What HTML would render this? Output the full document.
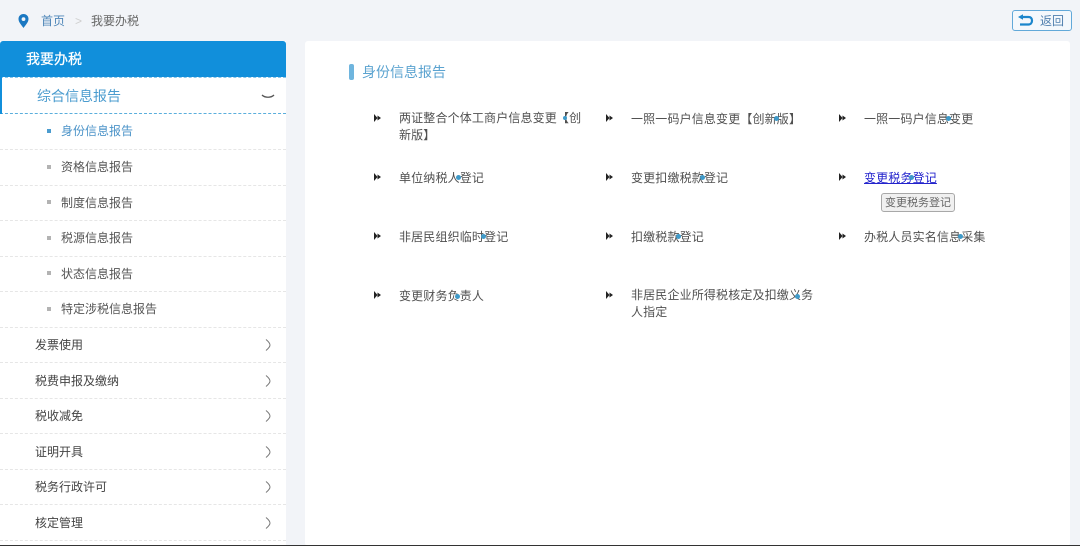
<!DOCTYPE html>
<html lang="zh"><head><meta charset="utf-8"><title>我要办税</title>
<style>
*{box-sizing:border-box}
html,body{margin:0;padding:0}
html{background:#f2f4f8}
body{width:1080px;height:546px;overflow:hidden;background:#f2f4f8;position:relative;font-family:"Liberation Sans","Noto Sans CJK SC",sans-serif;font-size:12px;color:#555;filter:blur(.35px)}
.a{position:absolute;white-space:nowrap;line-height:18px}
.l{letter-spacing:.15px;color:#505050}
#side{position:absolute;left:0;top:41px;width:286px;height:505px;background:#fff}
#side .hd{position:absolute;left:0;top:0;width:286px;height:36px;background:#118fdb;border-radius:3px 3px 0 0;color:#fff;font-size:14px;line-height:37px;padding-left:26px;-webkit-text-stroke:.25px #fff}
.row{position:absolute;left:0;width:286px;border-bottom:1px dashed #e6e6e6;height:36px}
.row span{position:absolute;left:35px;top:9px;line-height:18px;color:#444}
.row svg{position:absolute;left:265px;top:12px}
.sub span{left:61px;color:#555;top:8px}
.sub i{position:absolute;left:47px;top:15px;width:4px;height:4px;background:#b3b3b3}
#main{position:absolute;left:305px;top:41px;width:765px;height:505px;background:#fff;border-radius:3px}
.tri{position:absolute}
.d{position:absolute;width:5px;height:5px;border-radius:50%;background:#3f9ac9}
</style></head><body>

<svg class="a" style="left:18px;top:14px" width="11" height="14" viewBox="0 0 11 14"><path fill-rule="evenodd" fill="#1b78c2" d="M5.500 0C2.500 0 .5 2.200.5 5c0 3.300 3.300 6.500 5 9 1.700-2.500 5-5.700 5-9 0-2.800-2-5-5-5zm0 3.200a1.900 1.900 0 1 1 0 3.800 1.900 1.900 0 0 1 0-3.800z"/></svg>
<div class="a" style="left:41px;top:12px;color:#4f86b8">首页</div>
<div class="a" style="left:75px;top:12px;color:#cfcfcf">&gt;</div>
<div class="a" style="left:91px;top:12px;color:#666">我要办税</div>

<div class="a" style="left:1012px;top:10px;width:60px;height:21px;border:1px solid #62a9d9;border-radius:3px;background:#f4f8fc"></div>
<svg class="a" style="left:1017px;top:14px" width="17" height="14" viewBox="0 0 17 14"><path d="M5 3H11.500C13.700 3 15 4.300 15 6.500S13.700 10.500 11.500 10.500H3" fill="none" stroke="#1b86cc" stroke-width="2.200"/><path d="M1 3L6 .2V5.800z" fill="#1b86cc"/></svg>
<div class="a" style="left:1040px;top:12px;color:#4f7fae">返回</div>

<div id="side">
<div class="hd">我要办税</div>
<div style="position:absolute;left:0;top:36px;width:286px;height:37px;border-top:1px dashed #8cc6ea;border-bottom:1px dashed #5aaedc"></div>
<div style="position:absolute;left:0;top:36px;width:2px;height:37px;background:#118fdb"></div>
<div class="a" style="left:37px;top:46px;font-size:14px;color:#4b9ccf">综合信息报告</div>
<svg class="a" style="left:261px;top:53px" width="14" height="5" viewBox="0 0 14 5"><path d="M1 1C4 4 10 4 13 1" fill="none" stroke="#555" stroke-width="1.300"/></svg>

<div class="row sub" style="top:73px"><i style="background:#4b9ccf"></i><span style="color:#4b93c8">身份信息报告</span></div>
<div class="row sub" style="top:109px"><i></i><span>资格信息报告</span></div>
<div class="row sub" style="top:144px"><i></i><span style="top:9px">制度信息报告</span></div>
<div class="row sub" style="top:180px"><i></i><span>税源信息报告</span></div>
<div class="row sub" style="top:215px"><i></i><span style="top:9px">状态信息报告</span></div>
<div class="row sub" style="top:251px"><i></i><span>特定涉税信息报告</span></div>

<div class="row" style="top:286px"><span>发票使用</span><svg width="6" height="12" viewBox="0 0 6 12"><path d="M1 .5C4 3 5 4.500 5 6S4 9 1 11.500" fill="none" stroke="#777"/></svg></div>
<div class="row" style="top:322px"><span>税费申报及缴纳</span><svg width="6" height="12" viewBox="0 0 6 12"><path d="M1 .5C4 3 5 4.500 5 6S4 9 1 11.500" fill="none" stroke="#777"/></svg></div>
<div class="row" style="top:357px"><span>税收减免</span><svg width="6" height="12" viewBox="0 0 6 12"><path d="M1 .5C4 3 5 4.500 5 6S4 9 1 11.500" fill="none" stroke="#777"/></svg></div>
<div class="row" style="top:393px"><span>证明开具</span><svg width="6" height="12" viewBox="0 0 6 12"><path d="M1 .5C4 3 5 4.500 5 6S4 9 1 11.500" fill="none" stroke="#777"/></svg></div>
<div class="row" style="top:428px"><span>税务行政许可</span><svg width="6" height="12" viewBox="0 0 6 12"><path d="M1 .5C4 3 5 4.500 5 6S4 9 1 11.500" fill="none" stroke="#777"/></svg></div>
<div class="row" style="top:464px"><span>核定管理</span><svg width="6" height="12" viewBox="0 0 6 12"><path d="M1 .5C4 3 5 4.500 5 6S4 9 1 11.500" fill="none" stroke="#777"/></svg></div>
</div>

<div id="main"></div>
<div class="a" style="left:349px;top:64px;width:5px;height:16px;background:#6fb5de;border-radius:2px"></div>
<div class="a" style="left:362px;top:63px;font-size:14px;color:#5ba3d0">身份信息报告</div>

<svg width="0" height="0" style="position:absolute"><defs><path id="t" d="M0 0L3.500 4L0 8zM3.500 1.500L7 4L3.500 6.500z" fill="#222"/></defs></svg>
<svg class="tri" style="left:374px;top:114px" width="7" height="8"><use href="#t"/></svg>
<svg class="tri" style="left:606px;top:114px" width="7" height="8"><use href="#t"/></svg>
<svg class="tri" style="left:839px;top:114px" width="7" height="8"><use href="#t"/></svg>
<svg class="tri" style="left:374px;top:173px" width="7" height="8"><use href="#t"/></svg>
<svg class="tri" style="left:606px;top:173px" width="7" height="8"><use href="#t"/></svg>
<svg class="tri" style="left:839px;top:173px" width="7" height="8"><use href="#t"/></svg>
<svg class="tri" style="left:374px;top:232px" width="7" height="8"><use href="#t"/></svg>
<svg class="tri" style="left:606px;top:232px" width="7" height="8"><use href="#t"/></svg>
<svg class="tri" style="left:839px;top:232px" width="7" height="8"><use href="#t"/></svg>
<svg class="tri" style="left:374px;top:291px" width="7" height="8"><use href="#t"/></svg>
<svg class="tri" style="left:606px;top:291px" width="7" height="8"><use href="#t"/></svg>

<div class="a l" style="left:399px;top:110px;line-height:17px">两证整合个体工商户信息变更【创<br>新版】</div>
<div class="a l" style="left:631px;top:110px">一照一码户信息变更【创新版】</div>
<div class="a l" style="left:864px;top:110px">一照一码户信息变更</div>
<div class="a l" style="left:399px;top:169px">单位纳税人登记</div>
<div class="a l" style="left:631px;top:169px">变更扣缴税款登记</div>
<div class="a l" style="left:864px;top:169px;color:#2222cc;text-decoration:underline">变更税务登记</div>
<div class="a l" style="left:399px;top:228px">非居民组织临时登记</div>
<div class="a l" style="left:631px;top:228px">扣缴税款登记</div>
<div class="a l" style="left:864px;top:228px">办税人员实名信息采集</div>
<div class="a l" style="left:399px;top:287px">变更财务负责人</div>
<div class="a l" style="left:631px;top:287px;line-height:17px">非居民企业所得税核定及扣缴义务<br>人指定</div>

<div class="d" style="left:563px;top:116px;width:4px;height:4px"></div>
<div class="d" style="left:774px;top:116px"></div>
<div class="d" style="left:946px;top:116px"></div>
<div class="d" style="left:456px;top:175px"></div>
<div class="d" style="left:700px;top:175px"></div>
<div class="d" style="left:909px;top:175px"></div>
<div class="d" style="left:481px;top:234px"></div>
<div class="d" style="left:676px;top:234px"></div>
<div class="d" style="left:958px;top:234px"></div>
<div class="d" style="left:455px;top:294px"></div>
<div class="d" style="left:795px;top:294px"></div>

<div class="a" style="left:881px;top:193px;width:74px;height:19px;border:1px solid #a8a8a8;border-radius:3px;background:#f0f0f0;color:#666;font-size:11px;line-height:18px;text-align:center">变更税务登记</div>

<div style="position:absolute;left:0;top:545px;width:1080px;height:1px;background:#333"></div>
</body></html>
